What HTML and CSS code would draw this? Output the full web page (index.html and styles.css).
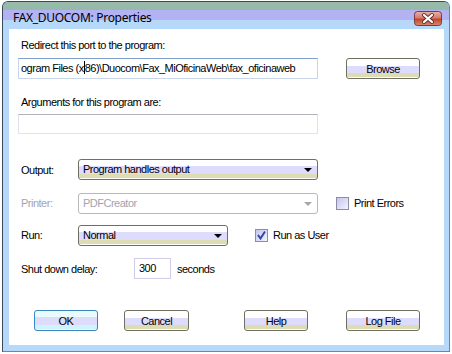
FILE: index.html
```html
<!DOCTYPE html>
<html lang="en">
<head>
    <meta charset="UTF-8">
    <title>FAX_DUOCOM: Properties</title>
    <link rel="stylesheet" href="styles.css">
</head>
<body>
    <div class="window">
        <div class="titlebar">
            <span class="title">FAX_DUOCOM: Properties</span>
            <span class="close">
                <svg width="28" height="15" viewBox="0 0 28 15">
                    <defs>
                        <linearGradient id="cg" x1="0" y1="0" x2="0" y2="1">
                            <stop offset="0" stop-color="#eab3a6"/>
                            <stop offset="0.45" stop-color="#d77b6c"/>
                            <stop offset="0.55" stop-color="#c2452f"/>
                            <stop offset="1" stop-color="#d98a6a"/>
                        </linearGradient>
                    </defs>
                    <rect x="0.5" y="0.5" width="27" height="14" rx="3" fill="url(#cg)" stroke="#7a3a36"/>
                    <path d="M10 4 L18 11 M18 4 L10 11" stroke="#5a3030" stroke-width="4" stroke-linecap="round"/>
                    <path d="M10 4 L18 11 M18 4 L10 11" stroke="#fff" stroke-width="2.2" stroke-linecap="round"/>
                </svg>
            </span>
        </div>
        <div class="frame">
            <div class="client">
                <div class="label first">Redirect this port to the program:</div>
                <div class="row path-row">
                    <div class="edit path">ogram Files (x<i class="caret"></i>86)\Duocom\Fax_MiOficinaWeb\fax_oficinaweb</div>
                    <button class="btn browse">Browse</button>
                </div>
                <div class="label second">Arguments for this program are:</div>
                <div class="edit args"></div>

                <div class="row output-row">
                    <span class="field-label">Output:</span>
                    <div class="combo wide">Program handles output<span class="arrow"></span></div>
                </div>
                <div class="row printer-row">
                    <span class="field-label disabled">Printer:</span>
                    <div class="combo wide off">PDFCreator<span class="arrow"></span></div>
                    <label class="check errors"><span class="box"></span>Print Errors</label>
                </div>
                <div class="row run-row">
                    <span class="field-label">Run:</span>
                    <div class="combo narrow">Normal<span class="arrow"></span></div>
                    <label class="check user"><span class="box checked">
                        <svg width="11" height="11" viewBox="0 0 11 11"><path d="M2 5 L4.5 8.5 L9 1.5" fill="none" stroke="#2a4aa8" stroke-width="2"/></svg>
                    </span>Run as User</label>
                </div>
                <div class="row delay-row">
                    <span class="field-label long">Shut down delay:</span>
                    <div class="edit delay">300</div>
                    <span class="unit">seconds</span>
                </div>

                <div class="row buttons">
                    <button class="btn ok">OK</button>
                    <button class="btn cancel">Cancel</button>
                    <button class="btn help">Help</button>
                    <button class="btn logfile">Log File</button>
                </div>
            </div>
        </div>
    </div>
</body>
</html>
```

FILE: styles.css
```css
body {
    margin: 0;
    background: #fff;
    font-family: "Liberation Sans", Arial, sans-serif;
    font-size: 11px;
    letter-spacing: -0.5px;
    color: #000;
}
.window {
    margin: 1px 0 0 2px;
    width: 446px;
    border: 1px solid #3b4a58;
    border-right-color: #2a9fd6;
    border-bottom-color: #2a9fd6;
    border-radius: 6px 6px 0 0;
    background: #b6d9f9;
    overflow: hidden;
}
.titlebar {
    height: 27px;
    display: flex;
    align-items: flex-start;
    justify-content: space-between;
    background: linear-gradient(#96b9a9 0, #96b9a9 8px, #b3b3f3 8px, #b3b3f3 18px, #b6d9f9 18px);
}
.title {
    font-family: "Noto Sans", sans-serif;
    font-size: 12px;
    letter-spacing: -0.3px;
    line-height: 16px;
    margin: 8px 0 0 10px;
}
.close {
    margin: 9px 7px 0 0;
    height: 15px;
}
.frame {
    padding: 0 5px 6px 6px;
}
.client {
    background: #fff;
    height: 316px;
    padding-left: 9px;
    display: flex;
    flex-direction: column;
}
.label {
    line-height: 14px;
    padding-left: 3px;
}
.label.first {
    margin-top: 9px;
}
.label.second {
    margin-top: 16px;
}
.row {
    display: flex;
    align-items: center;
}
.path-row {
    margin-top: 6px;
}
.edit {
    box-sizing: border-box;
    height: 21px;
    line-height: 19px;
    padding-left: 2px;
    border: 1px solid #c9d6ea;
    border-top-color: #7e9fcd;
    white-space: nowrap;
    overflow: hidden;
}
.path {
    width: 300px;
}
.caret {
    display: inline-block;
    width: 1px;
    height: 13px;
    background: #000;
    vertical-align: -2px;
}
.args {
    margin-top: 5px;
    width: 300px;
    height: 20px;
    border-color: #e3e1f0;
    border-top-color: #b3b2b8;
}
.field-label {
    width: 57px;
    padding-left: 3px;
}
.field-label.long {
    width: 113px;
}
.disabled {
    color: #a4a4b0;
}
.btn {
    box-sizing: border-box;
    height: 21px;
    padding: 0;
    font-family: "Liberation Sans", Arial, sans-serif;
    font-size: 11px;
    letter-spacing: -0.5px;
    color: #000;
    border: 1px solid #6f6f62;
    border-radius: 3px;
    background: linear-gradient(#fff 0, #fff 7px, #dedcfc 7px, #dedcfc 14px, #dddcb2 14px, #dddcb2 18px, #fff 18px);
}
.browse {
    width: 74px;
    margin-left: 28px;
}
.combo {
    position: relative;
    box-sizing: border-box;
    height: 21px;
    padding-left: 4px;
    line-height: 19px;
    border: 1px solid #6f6f62;
    border-radius: 3px;
    background: linear-gradient(#fff 0, #fff 6px, #dedcfc 6px, #dedcfc 14px, #dddcb2 14px, #dddcb2 18px, #fff 18px);
}
.combo.wide {
    width: 240px;
}
.combo.narrow {
    width: 150px;
}
.combo.off {
    background: #fff;
    border-color: #b8b8b8;
    color: #a4a4b0;
}
.arrow {
    position: absolute;
    right: 5px;
    top: 8px;
    border-left: 4px solid transparent;
    border-right: 4px solid transparent;
    border-top: 4px solid #000;
}
.off .arrow {
    border-top-color: #a8a8a8;
}
.output-row {
    margin-top: 25px;
}
.printer-row {
    margin-top: 12px;
    height: 22px;
}
.run-row {
    margin-top: 10px;
    height: 22px;
}
.delay-row {
    margin-top: 12px;
}
.check {
    display: flex;
    align-items: center;
}
.check.errors {
    margin-left: 18px;
}
.check.user {
    margin-left: 27px;
}
.box {
    box-sizing: border-box;
    width: 13px;
    height: 13px;
    margin-right: 5px;
    border: 1px solid #8c8caa;
    background: linear-gradient(135deg, #c4c4ee, #f4f4ff);
    display: flex;
    align-items: center;
    justify-content: center;
}
.delay {
    width: 37px;
    padding-left: 4px;
    border-color: #cfcdea;
}
.unit {
    margin-left: 6px;
}
.buttons {
    margin-top: 31px;
    padding-left: 16px;
}
.ok {
    width: 64px;
    border-color: #3b86bd;
    background: linear-gradient(#e9fbfd 0, #e9fbfd 6px, #dedcfc 6px, #dedcfc 14px, #cef3fc 14px, #cef3fc 18px, #e9fbfd 18px);
}
.cancel {
    width: 65px;
    margin-left: 26px;
}
.help {
    width: 64px;
    margin-left: 55px;
}
.logfile {
    width: 74px;
    margin-left: 38px;
}
```
